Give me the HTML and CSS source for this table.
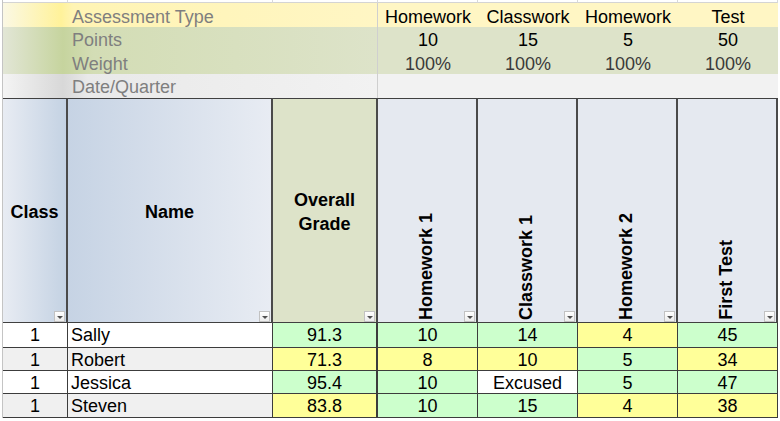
FILE: index.html
```html
<!DOCTYPE html>
<html>
<head>
<meta charset="utf-8">
<link rel="stylesheet" href="styles.css">
</head>
<body>
<div class="sheet">
  <div class="strip"></div><div class="strip"></div><div class="strip"></div><div class="strip"></div><div class="strip"></div><div class="strip"></div><div class="strip"></div>

  <div class="label lab-type">Assessment Type</div>
  <div class="val v-type">Homework</div><div class="val v-type">Classwork</div><div class="val v-type">Homework</div><div class="val v-type">Test</div>

  <div class="label lab-pts">Points</div>
  <div class="val v-pts">10</div><div class="val v-pts">15</div><div class="val v-pts">5</div><div class="val v-pts">50</div>

  <div class="label lab-wt">Weight</div>
  <div class="val v-wt">100%</div><div class="val v-wt">100%</div><div class="val v-wt">100%</div><div class="val v-wt">100%</div>

  <div class="label lab-date">Date/Quarter</div>
  <div class="val v-date"></div><div class="val v-date"></div><div class="val v-date"></div><div class="val v-date"></div>

  <div class="hd hd-class">Class<span class="dd"></span></div>
  <div class="hd hd-name">Name<span class="dd"></span></div>
  <div class="hd hd-overall">Overall<br>Grade<span class="dd"></span></div>
  <div class="hd hd-rot"><span class="rot">Homework 1</span><span class="dd"></span></div>
  <div class="hd hd-rot"><span class="rot">Classwork 1</span><span class="dd"></span></div>
  <div class="hd hd-rot"><span class="rot">Homework 2</span><span class="dd"></span></div>
  <div class="hd hd-rot"><span class="rot">First Test</span><span class="dd"></span></div>

  <div class="c c-class">1</div><div class="c c-name">Sally</div><div class="c num g over">91.3</div><div class="c num g">10</div><div class="c num g">14</div><div class="c num y">4</div><div class="c num g">45</div>
  <div class="c c-class alt">1</div><div class="c c-name alt">Robert</div><div class="c num y over">71.3</div><div class="c num y">8</div><div class="c num y">10</div><div class="c num g">5</div><div class="c num y">34</div>
  <div class="c c-class">1</div><div class="c c-name">Jessica</div><div class="c num g over">95.4</div><div class="c num g">10</div><div class="c num w">Excused</div><div class="c num g">5</div><div class="c num g">47</div>
  <div class="c c-class alt">1</div><div class="c c-name alt">Steven</div><div class="c num y over">83.8</div><div class="c num g">10</div><div class="c num g">15</div><div class="c num y">4</div><div class="c num y">38</div>
</div>
</body>
</html>
```

FILE: styles.css
```css
* { box-sizing: border-box; }
html, body { margin: 0; padding: 0; background: #ffffff; }
body {
  font-family: "Liberation Sans", Arial, sans-serif;
  font-size: 18px;
  color: #000;
  width: 780px;
  height: 421px;
  overflow: hidden;
}
.sheet {
  margin-left: 2px;
  border-left: 1px solid #c4c4c4;
  display: grid;
  grid-template-columns: 65px 205px 105px 100px 100px 100px 100px;
  grid-template-rows: 3px 24px 23px 24px 24px 225px 25px 23px 23px 24px;
  width: 776px;
}
.strip {
  border-right: 1px solid #d9d9d9;
  border-bottom: 1px solid #d4d4d4;
}
.label {
  grid-column: 1 / 4;
  padding-left: 69px;
  line-height: 24px;
  padding-top: 2px;
  color: #7f7f7f;
  border-right: 1px solid #cfcfcf;
}
.lab-type {
  background: linear-gradient(to right, #fbf8e4 0px, #fff29a 58px, #fff4b4 70px, #fff6c4 100%);
}
.lab-pts, .lab-wt {
  background: linear-gradient(to right, #e2e6d6 0px, #c6d49e 60px, #d3ddb5 90px, #dde3c9 100%);
}
.lab-date {
  background: linear-gradient(to right, #f4f4f4 0px, #d8d8d8 60px, #e9e9e9 85px, #f2f2f2 100%);
  padding-top: 1px;
}
.val {
  text-align: center;
  line-height: 24px;
  padding-top: 2px;
}
.v-type { background: #fff6c4; }
.v-pts { background: #dde3c9; }
.v-wt { background: #dde3c9; color: #3a3a3a; }
.v-date { background: #f2f2f2; }
.lab-pts, .v-pts { line-height: 22px; }

.hd {
  position: relative;
  font-weight: bold;
  border-top: 1px solid #404040;
  border-bottom: 1px solid #404040;
  border-right: 2px solid #4a4a4a;
  display: flex;
  align-items: center;
  justify-content: center;
  text-align: center;
  line-height: 24px;
  padding-top: 3px;
}
.hd-class { background: linear-gradient(to right, #e8ecf3 0%, #c4d2e3 100%); }
.hd-name { background: linear-gradient(to right, #c6d3e4 0%, #e8ecf3 100%); }
.hd-overall { background: #dde3c9; }
.hd-rot {
  background: #e5e9f0;
  align-items: flex-end;
  padding-top: 0;
  padding-bottom: 2px;
  padding-right: 2px;
}
.rot {
  writing-mode: vertical-rl;
  transform: rotate(180deg);
  line-height: 20px;
  white-space: nowrap;
}
.dd {
  position: absolute;
  right: 1px;
  bottom: 0px;
  width: 11px;
  height: 11px;
  border: 1px solid #c2c2c2;
  background: linear-gradient(#ffffff, #ececec);
}
.dd::after {
  content: "";
  position: absolute;
  left: 2px;
  top: 4px;
  border-left: 3px solid transparent;
  border-right: 3px solid transparent;
  border-top: 3px solid #505050;
}

.c {
  line-height: 21px;
  padding-top: 2px;
  border-bottom: 1px solid #3c3c3c;
  border-right: 1px solid #3c3c3c;
  background: #ffffff;
}
.c-class { text-align: center; }
.c-name { padding-left: 3px; }
.alt { background: #f0f0f0; }
.num { text-align: center; }
.over { border-right: 2px solid #3c3c3c; }
.g { background: #ccffcc; }
.y { background: #ffff99; }
.w { background: #ffffff; }
```
